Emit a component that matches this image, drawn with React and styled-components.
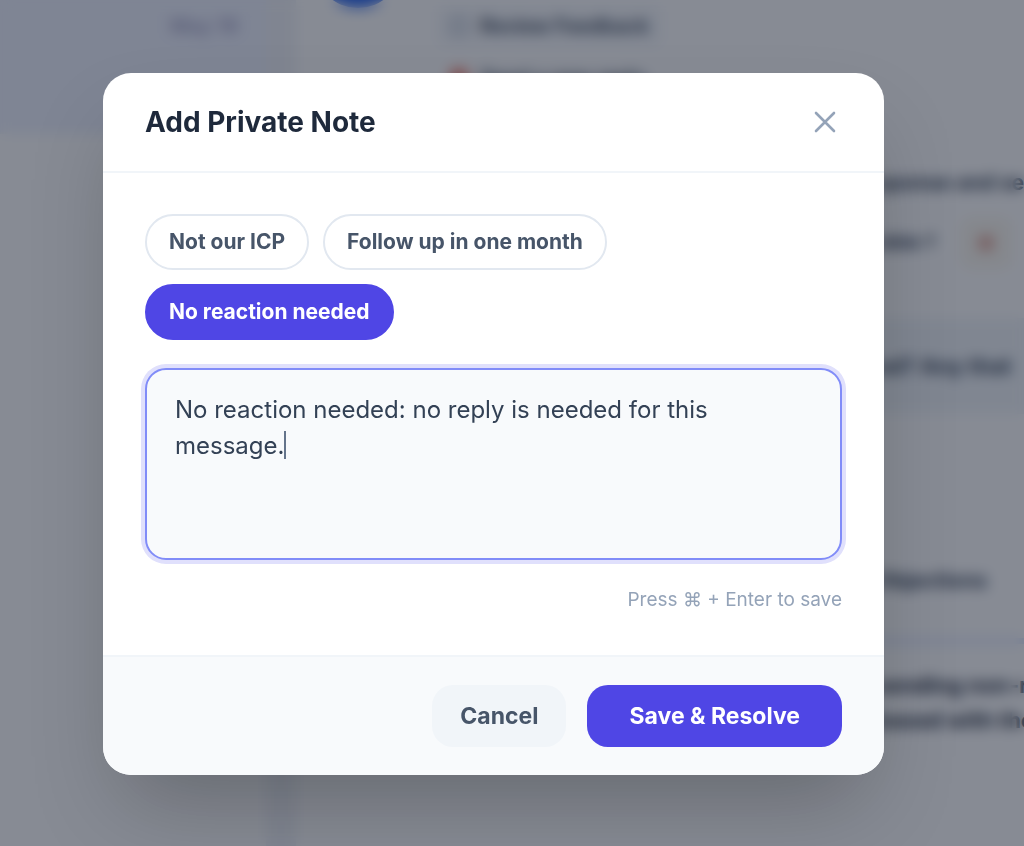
import React, { useEffect, useRef, useState } from "react";
import styled, { createGlobalStyle } from "styled-components";

const GlobalStyle = createGlobalStyle`
  *, *::before, *::after { box-sizing: border-box; }
  body {
    margin: 0;
    overflow: hidden;
    background: #ffffff;
    color: #1e293b;
    font-family: Inter, "Liberation Sans", "DejaVu Sans", sans-serif;
  }
  button, textarea { font-family: inherit; }
`;

/* Inbox page behind the dialog */
const Inbox = styled.div`
  display: grid;
  grid-template-columns: 266px 30px minmax(0, 1fr);
  height: 100vh;
  overflow: hidden;
`;

const ThreadList = styled.aside`
  display: flex;
  flex-direction: column;
`;

const Thread = styled.article`
  display: flex;
  justify-content: flex-end;
  height: 134px;
  padding: 14px 28px;
  background: #eef2ff;
  border-bottom: 2px solid #f1f5f9;
`;

const ThreadDate = styled.time`
  color: #a19fc4;
  font-size: 20px;
  line-height: 24px;
  font-weight: 600;
`;

const Divider = styled.div`
  background: #f1f3f8;
`;

const Conversation = styled.main`
  display: flex;
  flex-direction: column;
`;

const LeadHeader = styled.header`
  display: flex;
  align-items: flex-start;
  gap: 34px;
  height: 90px;
  padding-left: 18px;
`;

const Avatar = styled.div`
  width: 88px;
  height: 88px;
  margin-top: -80px;
  border-radius: 50%;
  background: #2563eb;
`;

const TagList = styled.div`
  display: flex;
  flex-direction: column;
  gap: 10px;
  padding-top: 5px;
`;

const Tag = styled.span`
  display: flex;
  align-items: center;
  gap: 12px;
  height: 42px;
  padding: 0 14px;
  border-radius: 8px;
  background: ${(p) => (p.$plain ? "transparent" : "#f6f8fb")};
  color: #334155;
  font-size: 20px;
  font-weight: 600;
`;

const TagMark = styled.i`
  width: 18px;
  height: 18px;
  border: 3px solid ${(p) => p.$color};
  border-radius: 5px;
  background: ${(p) => (p.$filled ? p.$color : "transparent")};
`;

const Details = styled.section`
  display: flex;
  flex-direction: column;
  margin-left: 580px;
  padding-top: 74px;
  white-space: nowrap;
`;

const DetailRow = styled.div`
  display: flex;
  align-items: center;
  gap: 24px;
  height: ${(p) => p.$height}px;
  background: ${(p) => p.$background || "transparent"};
  border-bottom: ${(p) => (p.$line ? "6px solid #e0e7ff" : "0")};
  color: ${(p) => p.$color || "#334155"};
  font-size: ${(p) => p.$size || 19}px;
  line-height: 36px;
  font-weight: 700;
`;

const Alert = styled.span`
  display: flex;
  align-items: center;
  justify-content: center;
  width: 54px;
  height: 54px;
  border-radius: 14px;
  background: #fbf8f0;
`;

const AlertDot = styled.i`
  width: 16px;
  height: 16px;
  border-radius: 50%;
  background: #e0a394;
`;

/* Dialog */
const Overlay = styled.div`
  position: fixed;
  inset: 0;
  display: flex;
  align-items: center;
  padding: 2px 140px 0 103px;
  background: rgba(15, 23, 42, 0.5);
  backdrop-filter: blur(7px);
`;

const Dialog = styled.form`
  flex: 1;
  min-width: 0;
  overflow: hidden;
  border-radius: 28px;
  background: #ffffff;
  box-shadow: 0 44px 88px -20px rgba(0, 0, 0, 0.25);
`;

const DialogHeader = styled.header`
  display: flex;
  align-items: center;
  justify-content: space-between;
  height: 100px;
  padding: 0 42px;
  border-bottom: 2px solid #f1f5f9;
`;

const Title = styled.h2`
  margin: 0;
  color: #1e293b;
  font-size: 28px;
  line-height: 36px;
  font-weight: 700;
`;

const CloseButton = styled.button`
  display: flex;
  padding: 0;
  border: 0;
  background: transparent;
  color: #94a3b8;
  cursor: pointer;
`;

const DialogBody = styled.div`
  display: flex;
  flex-direction: column;
  gap: 28px;
  padding: 41px 42px 43px;
`;

const Chips = styled.div`
  display: flex;
  flex-wrap: wrap;
  gap: 14px;
`;

const Chip = styled.button`
  height: 56px;
  padding: 0 22px;
  border: 2px solid ${(p) => (p.$active ? "#4f46e5" : "#e2e8f0")};
  border-radius: 28px;
  background: ${(p) => (p.$active ? "#4f46e5" : "#ffffff")};
  color: ${(p) => (p.$active ? "#ffffff" : "#475569")};
  font-size: 21px;
  line-height: 28px;
  font-weight: 700;
  cursor: pointer;
`;

const NoteBox = styled.div`
  position: relative;
`;

const NoteField = styled.textarea`
  display: block;
  width: 100%;
  height: 192px;
  padding: 22px 28px;
  border: 2px solid #818cf8;
  border-radius: 21px;
  outline: 0;
  resize: none;
  background: #f8fafc;
  box-shadow: 0 0 0 4px #e0e0fc;
  color: #334155;
  caret-color: transparent;
  font-size: 24px;
  line-height: 36px;
`;

const Caret = styled.span`
  position: absolute;
  top: 63px;
  left: 139px;
  width: 2px;
  height: 28px;
  background: #64748b;
  pointer-events: none;
`;

const Hint = styled.p`
  margin: 0;
  color: #94a3b8;
  font-size: 19px;
  line-height: 24px;
  text-align: right;
`;

const DialogFooter = styled.footer`
  display: flex;
  justify-content: flex-end;
  gap: 21px;
  padding: 28px 42px;
  border-top: 2px solid #f1f5f9;
  background: #f8fafc;
`;

const ActionButton = styled.button`
  height: 62px;
  padding: 0 ${(p) => (p.$primary ? 42 : 28)}px;
  border: 0;
  border-radius: 21px;
  background: ${(p) => (p.$primary ? "#4f46e5" : "#f1f5f9")};
  color: ${(p) => (p.$primary ? "#ffffff" : "#475569")};
  font-size: 23px;
  line-height: 32px;
  font-weight: 700;
  cursor: pointer;
`;

const presets = [
  { label: "Not our ICP", note: "Not our ICP: this lead is outside our ideal customer profile." },
  { label: "Follow up in one month", note: "Follow up in one month." },
  { label: "No reaction needed", note: "No reaction needed: no reply is needed for this message." },
];

export default function App() {
  const [selected, setSelected] = useState(2);
  const [note, setNote] = useState(presets[2].note);
  const field = useRef(null);

  useEffect(() => {
    const el = field.current;
    el.focus();
    el.setSelectionRange(el.value.length, el.value.length);
  }, []);

  const choose = (index) => {
    setSelected(index);
    setNote(presets[index].note);
  };

  return (
    <>
      <GlobalStyle />
      <Inbox aria-hidden="true">
        <ThreadList>
          <Thread>
            <ThreadDate>May 19</ThreadDate>
          </Thread>
        </ThreadList>
        <Divider />
        <Conversation>
          <LeadHeader>
            <Avatar />
            <TagList>
              <Tag>
                <TagMark $color="#a8b4c6" />
                Review Feedback
              </Tag>
              <Tag $plain>
                <TagMark $color="#ef7b6c" $filled />
                Send a new reply
              </Tag>
            </TagList>
          </LeadHeader>
          <Details>
            <DetailRow $height={38} $size={21}>sponse and se</DetailRow>
            <DetailRow $height={82}>
              sible ?
              <Alert>
                <AlertDot />
              </Alert>
            </DetailRow>
            <DetailRow $height={34} />
            <DetailRow $height={96} $background="#f1f5f9" $size={22}>ed? Any that</DetailRow>
            <DetailRow $height={142} />
            <DetailRow $height={50} $size={21}>Objections</DetailRow>
            <DetailRow $height={38} $line />
            <DetailRow $height={24} />
            <DetailRow $height={34} $color="#1e293b" $size={22}>sending non-r</DetailRow>
            <DetailRow $height={36} $color="#1e293b" $size={22}>based with the</DetailRow>
          </Details>
        </Conversation>
      </Inbox>

      <Overlay>
        <Dialog
          role="dialog"
          aria-modal="true"
          aria-labelledby="note-title"
          onSubmit={(e) => e.preventDefault()}
        >
          <DialogHeader>
            <Title id="note-title">Add Private Note</Title>
            <CloseButton type="button" aria-label="Close">
              <svg width="34" height="34" viewBox="0 0 34 34" fill="none" stroke="currentColor" strokeWidth="2.6" strokeLinecap="round">
                <path d="M8 8l18 18M26 8l-18 18" />
              </svg>
            </CloseButton>
          </DialogHeader>
          <DialogBody>
            <Chips>
              {presets.map((preset, index) => (
                <Chip
                  key={preset.label}
                  type="button"
                  $active={index === selected}
                  aria-pressed={index === selected}
                  onClick={() => choose(index)}
                >
                  {preset.label}
                </Chip>
              ))}
            </Chips>
            <NoteBox>
              <NoteField
                ref={field}
                aria-label="Private note"
                value={note}
                onChange={(e) => setNote(e.target.value)}
              />
              {note === presets[2].note && <Caret />}
            </NoteBox>
            <Hint>Press ⌘ + Enter to save</Hint>
          </DialogBody>
          <DialogFooter>
            <ActionButton type="button">Cancel</ActionButton>
            <ActionButton type="submit" $primary>
              Save &amp; Resolve
            </ActionButton>
          </DialogFooter>
        </Dialog>
      </Overlay>
    </>
  );
}
